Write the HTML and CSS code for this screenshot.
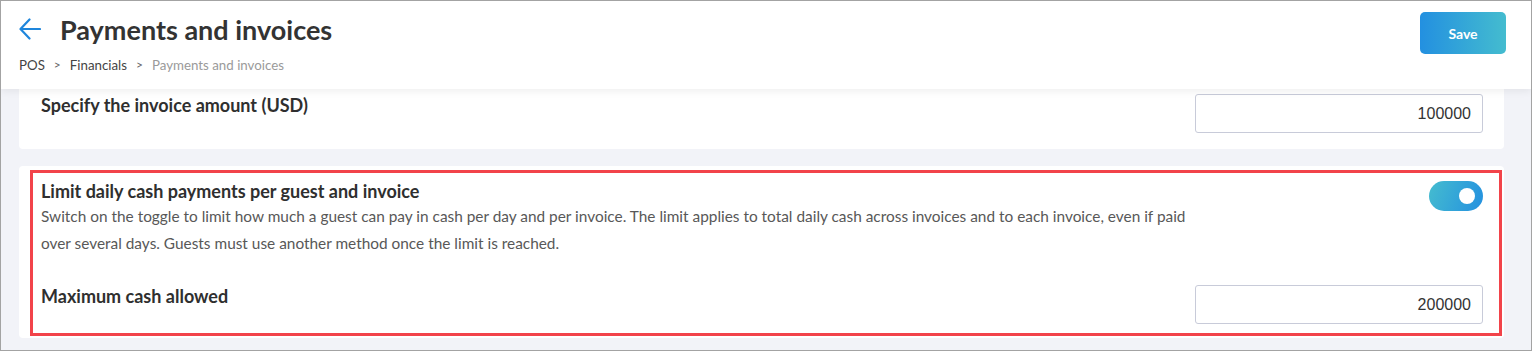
FILE: index.html
```html
<!DOCTYPE html>
<html>
<head>
<meta charset="utf-8">
<link rel="stylesheet" href="styles.css">
</head>
<body>
<div class="frame">
  <header class="header">
    <div class="header-left">
      <div class="title-row">
        <svg class="back" width="22" height="22" viewBox="0 0 22 22" fill="none" stroke="#1f86dc" stroke-width="2.2" stroke-linecap="round" stroke-linejoin="round">
          <path d="M21 11H2M10.5 1.5L1.5 11l9 9.5"/>
        </svg>
        <h1 class="title">Payments and invoices</h1>
      </div>
      <nav class="crumbs">
        <span class="crumb">POS</span>
        <span class="sep">&gt;</span>
        <span class="crumb">Financials</span>
        <span class="sep">&gt;</span>
        <span class="crumb current">Payments and invoices</span>
      </nav>
    </div>
    <button class="save">Save</button>
  </header>
  <main class="content">
    <section class="card card-first">
      <div class="row">
        <div class="text-col">
          <div class="label">Specify the invoice amount (USD)</div>
        </div>
        <div class="ctrl-col">
          <div class="input">100000</div>
        </div>
      </div>
    </section>
    <section class="card card-second">
      <div class="highlight"></div>
      <div class="row">
        <div class="text-col">
          <div class="label">Limit daily cash payments per guest and invoice</div>
          <p class="desc">Switch on the toggle to limit how much a guest can pay in cash per day and per invoice. The limit applies to total daily cash across invoices and to each invoice, even if paid over several days. Guests must use another method once the limit is reached.</p>
        </div>
        <div class="ctrl-col ctrl-toggle">
          <div class="toggle"><span class="knob"></span></div>
        </div>
      </div>
      <div class="row row-gap">
        <div class="text-col">
          <div class="label">Maximum cash allowed</div>
        </div>
        <div class="ctrl-col">
          <div class="input">200000</div>
        </div>
      </div>
    </section>
  </main>
</div>
</body>
</html>
```
FILE: styles.css
```css
* { box-sizing: border-box; }
html, body { margin: 0; padding: 0; }
body {
  font-family: "Lato", "Noto Sans", sans-serif;
  color: #333;
  background: #fff;
}
.frame {
  width: 1532px;
  height: 351px;
  border: 1px solid #a3a3a3;
  background: #f2f3f8;
  overflow: hidden;
  position: relative;
}
.header {
  position: relative;
  z-index: 2;
  height: 88px;
  background: #fff;
  box-shadow: 0 2px 8px rgba(0, 0, 0, 0.07);
  display: flex;
  justify-content: space-between;
  align-items: flex-start;
  padding: 10px 25px 0 18px;
}
.title-row {
  display: flex;
  align-items: center;
  gap: 19px;
  height: 38px;
}
.back { display: block; margin-top: -2px; }
.title {
  margin: 0;
  font-size: 27px;
  font-weight: 700;
  color: #333;
  letter-spacing: 0;
  line-height: 38px;
}
.crumbs {
  margin-top: 7px;
  font-size: 13.3px;
  line-height: 18px;
  display: flex;
  gap: 9px;
  padding-left: 0;
}
.crumb { color: #444; }
.sep { color: #666; font-size: 12px; }
.crumb.current { color: #9a9a9a; }
.save {
  margin-top: 1px;
  width: 86px;
  height: 42px;
  border: none;
  border-radius: 5px;
  background: linear-gradient(90deg, #2390e0, #44bccf);
  color: #fff;
  font-family: "Lato", sans-serif;
  font-weight: 700;
  font-size: 14px;
}
.content {
  padding: 0 27px 0 18px;
  display: flex;
  flex-direction: column;
  gap: 17px;
}
.card {
  background: #fff;
  border-radius: 4px;
  padding: 0 21px 0 22px;
  position: relative;
}
.card-first {
  padding-top: 5px;
  padding-bottom: 16px;
  border-radius: 0 0 4px 4px;
}
.card-second {
  padding-top: 14px;
  padding-bottom: 14px;
}
.row {
  display: flex;
  justify-content: space-between;
  align-items: flex-start;
}
.row-gap { margin-top: 28px; }
.text-col { flex: 1; max-width: 1154px; }
.ctrl-col { width: 288px; display: flex; justify-content: flex-end; }
.label {
  font-size: 18px;
  font-weight: 700;
  line-height: 22px;
  color: #2f2f2f;
}
.desc {
  margin: 1px 0 0;
  font-size: 15.4px;
  line-height: 27px;
  color: #585858;
}
.input {
  width: 288px;
  height: 39px;
  border: 1px solid #c8cbd9;
  border-radius: 3px;
  background: #fff;
  text-align: right;
  padding-right: 11px;
  font-family: "Liberation Sans", Arial, sans-serif;
  font-size: 16px;
  line-height: 37px;
  color: #333;
}
.ctrl-toggle { padding-top: 1px; }
.toggle {
  width: 54px;
  height: 30px;
  border-radius: 15px;
  background: linear-gradient(110deg, #45bccf, #2390e0);
  position: relative;
}
.knob {
  position: absolute;
  top: 7px;
  right: 8px;
  width: 16px;
  height: 16px;
  border-radius: 50%;
  background: #fff;
}
.highlight {
  position: absolute;
  left: 11px;
  top: 4px;
  right: 2px;
  bottom: 2px;
  border: 3px solid #f2434a;
  pointer-events: none;
}
```
